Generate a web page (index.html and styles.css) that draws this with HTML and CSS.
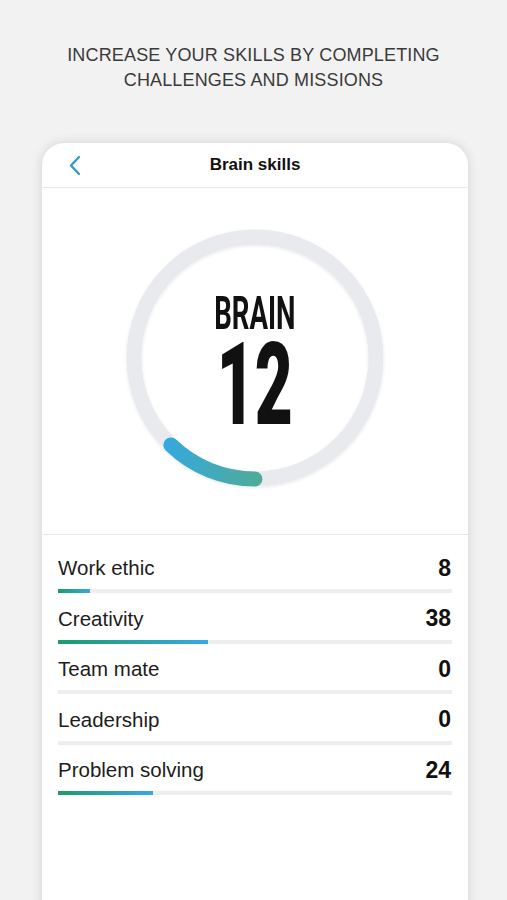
FILE: index.html
```html
<!DOCTYPE html>
<html lang="en">
<head>
<meta charset="utf-8">
<title>Brain skills</title>
<link rel="stylesheet" href="styles.css">
</head>
<body>
<header class="intro">
  <h1 class="intro-title">INCREASE YOUR SKILLS BY COMPLETING<br>CHALLENGES AND MISSIONS</h1>
</header>
<main class="card">
  <div class="nav">
    <svg class="back" width="14" height="21" viewBox="0 0 14 21" aria-hidden="true">
      <path d="M11 2 L3 10.5 L11 19" fill="none" stroke="#2b9cc4" stroke-width="2.3" stroke-linecap="round" stroke-linejoin="round"/>
    </svg>
    <div class="nav-title">Brain skills</div>
    <span></span>
  </div>
  <section class="gauge-wrap">
    <div class="gauge">
      <svg class="ring" width="270" height="270" viewBox="0 0 270 270" aria-hidden="true">
        <defs>
          <linearGradient id="arcGrad" gradientUnits="userSpaceOnUse" x1="45" y1="0" x2="140" y2="0">
            <stop offset="0" stop-color="#34a9de"/>
            <stop offset="1" stop-color="#4fab98"/>
          </linearGradient>
          <filter id="soft" x="-10%" y="-10%" width="120%" height="120%">
            <feDropShadow dx="0" dy="1" stdDeviation="1.5" flood-color="#000" flood-opacity="0.10"/>
          </filter>
        </defs>
        <circle cx="135" cy="135" r="121" fill="none" stroke="#e9eaee" stroke-width="15" filter="url(#soft)"/>
        <path d="M 135 256 A 121 121 0 0 1 50.9 222" fill="none" stroke="url(#arcGrad)" stroke-width="15" stroke-linecap="round"/>
      </svg>
      <div class="gauge-text">
        <div class="gauge-label">BRAIN</div>
        <div class="gauge-value">12</div>
      </div>
    </div>
  </section>
  <section class="skills">
    <div class="skill">
      <div class="skill-head"><span class="skill-name">Work ethic</span><span class="skill-val">8</span></div>
      <div class="track"><div class="fill" style="width:8%"></div></div>
    </div>
    <div class="skill">
      <div class="skill-head"><span class="skill-name">Creativity</span><span class="skill-val">38</span></div>
      <div class="track"><div class="fill" style="width:38%"></div></div>
    </div>
    <div class="skill">
      <div class="skill-head"><span class="skill-name">Team mate</span><span class="skill-val">0</span></div>
      <div class="track"><div class="fill" style="width:0%"></div></div>
    </div>
    <div class="skill">
      <div class="skill-head"><span class="skill-name">Leadership</span><span class="skill-val">0</span></div>
      <div class="track"><div class="fill" style="width:0%"></div></div>
    </div>
    <div class="skill">
      <div class="skill-head"><span class="skill-name">Problem solving</span><span class="skill-val">24</span></div>
      <div class="track"><div class="fill" style="width:24%"></div></div>
    </div>
  </section>
</main>
</body>
</html>
```
FILE: styles.css
```css
html, body {
  margin: 0;
  padding: 0;
}
body {
  background: #f2f2f2;
  font-family: "Liberation Sans", Arial, sans-serif;
  color: #1a1a1a;
  height: 900px;
  overflow: hidden;
}
.intro {
  padding-top: 43px;
  text-align: center;
}
.intro-title {
  margin: 0;
  font-family: "Liberation Sans", Arial, sans-serif;
  font-weight: 400;
  font-size: 18px;
  line-height: 25px;
  letter-spacing: 0.15px;
  color: #3a3a3a;
}
.card {
  display: block;
  margin: 50px 0 0 42px;
  width: 426px;
  height: 800px;
  background: #fff;
  border-radius: 22px 22px 0 0;
  box-shadow: 0 0 12px rgba(0, 0, 0, 0.13);
  overflow: hidden;
}
.nav {
  height: 44px;
  display: grid;
  grid-template-columns: 1fr auto 1fr;
  align-items: center;
  border-bottom: 1px solid #e9e9e9;
}
.back {
  margin-left: 26px;
}
.nav-title {
  font-weight: 700;
  font-size: 17px;
  color: #111;
}
.gauge-wrap {
  display: flex;
  justify-content: center;
  padding: 35px 0 41px;
  border-bottom: 1px solid #e6e6e6;
}
.gauge {
  display: grid;
  width: 270px;
  height: 270px;
}
.ring, .gauge-text {
  grid-area: 1 / 1;
}
.gauge-text {
  display: flex;
  flex-direction: column;
  align-items: center;
  justify-content: center;
  padding-top: 8px;
}
.gauge-label {
  font-family: Roboto, "Liberation Sans", sans-serif;
  font-weight: 700;
  font-size: 46px;
  line-height: 34px;
  transform: scaleX(0.6);
  color: #111;
}
.gauge-value {
  font-family: Roboto, "Liberation Sans", sans-serif;
  font-weight: 900;
  font-size: 115px;
  line-height: 86px;
  transform: scaleX(0.57);
  color: #111;
  margin-top: 12px;
}
.skills {
  padding: 21px 16px 0 16px;
  display: flex;
  flex-direction: column;
  gap: 13.5px;
}
.skill-head {
  display: flex;
  justify-content: space-between;
  align-items: center;
  height: 24px;
}
.skill-name {
  font-size: 20.5px;
  color: #1c1c1c;
}
.skill-val {
  font-weight: 700;
  font-size: 23px;
  color: #111;
  margin-right: 1px;
}
.track {
  margin-top: 9px;
  height: 4px;
  background: #eeeeee;
}
.fill {
  height: 100%;
  background: linear-gradient(90deg, #1e9a6c, #37a9e3);
}
```
